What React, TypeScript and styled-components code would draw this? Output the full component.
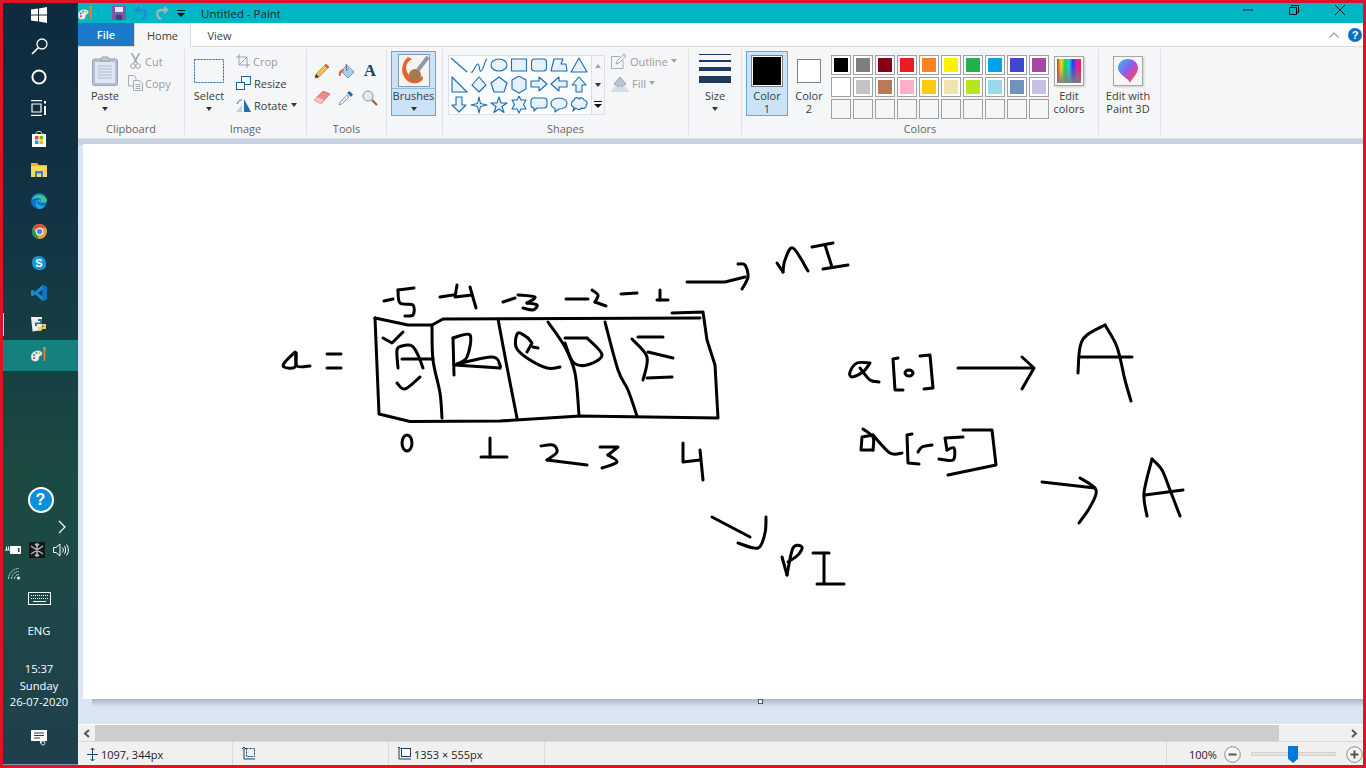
import React from 'react'
import { styled, createGlobalStyle } from 'styled-components'

const GlobalStyle = createGlobalStyle`
  html, body { margin: 0; padding: 0; overflow: hidden; }
  body { font-family: "Open Sans", "Noto Sans", sans-serif; }
  svg { display: block; flex: none; }
`

const Screen = styled.div`
  box-sizing: border-box;
  width: 1366px;
  height: 768px;
  border: 3px solid #dc1329;
  display: flex;
  overflow: hidden;
`

/* ---- taskbar ---- */
const Taskbar = styled.aside`
  width: 75px;
  flex: none;
  display: flex;
  flex-direction: column;
  align-items: center;
  color: #fff;
  background: linear-gradient(180deg, #0e2b3f 0%, #123443 30%, #1b4a42 62%, #1e4747 78%, #1f3f4c 100%);
  border-bottom: 1px solid #7d9aa5;
  box-sizing: border-box;
`
const TaskList = styled.div`
  align-self: stretch;
  margin-top: -3px;
  flex: none;
`
const TaskButton = styled.div<{ $active?: boolean; $running?: boolean }>`
  position: relative;
  height: 30.9px;
  padding-right: 3px;
  display: flex;
  align-items: center;
  justify-content: center;
  background: ${p => (p.$active ? '#14807f' : 'transparent')};
  &::before {
    content: '';
    display: ${p => (p.$running ? 'block' : 'none')};
    position: absolute;
    left: 0;
    top: 4px;
    bottom: 4px;
    width: 1px;
    background: #d8dde0;
  }
`
const HelpBall = styled.div`
  margin-top: 116px;
  width: 22px;
  height: 22px;
  border-radius: 50%;
  border: 2px solid #fff;
  background: #0a8fdc;
  color: #fff;
  font: bold 16px/22px "Liberation Sans", sans-serif;
  text-align: center;
  flex: none;
`
const TrayChevron = styled.div`
  align-self: flex-end;
  margin: 7px 12px 0 0;
  height: 14px;
`
const TrayRow = styled.div`
  align-self: stretch;
  display: flex;
  justify-content: space-between;
  align-items: center;
  padding: 0 9px 0 2px;
  margin-top: 7px;
  height: 18px;
`
const WifiRow = styled.div`
  align-self: flex-start;
  margin: 8px 0 0 5px;
`
const KeyboardRow = styled.div`
  margin: 12px 3px 0 0;
`
const TrayText = styled.div<{ $mt: number }>`
  margin: ${p => p.$mt}px 3px 0 0;
  font-size: 11.2px;
  line-height: 16.5px;
  text-align: center;
  white-space: nowrap;
`
const NotifyRow = styled.div`
  margin: 19px 3px 0 0;
`

/* ---- window chrome ---- */
const Win = styled.main`
  flex: 1;
  min-width: 0;
  display: flex;
  flex-direction: column;
  color: #3b3b3b;
  font-size: 11px;
`
const TitleBar = styled.header`
  height: 20px;
  flex: none;
  background: #00b5c4;
  display: flex;
  align-items: center;
  color: #1e2a2c;
`
const QatSlot = styled.div<{ $w: number; $ml?: number }>`
  width: ${p => p.$w}px;
  margin-left: ${p => p.$ml ?? 0}px;
  flex: none;
  display: flex;
  justify-content: center;
`
const QatSep = styled.div<{ $ml: number }>`
  width: 1px;
  height: 14px;
  margin-left: ${p => p.$ml}px;
  background: #5a9aa0;
  flex: none;
`
const TitleText = styled.div`
  margin-left: 7px;
  font-size: 11.5px;
  flex: 1;
`
const WinControl = styled.div`
  width: 46px;
  flex: none;
  display: flex;
  justify-content: center;
  margin-top: -6px;
`
const Tabs = styled.nav`
  height: 24px;
  flex: none;
  background: #fff;
  display: flex;
  align-items: stretch;
  border-bottom: 1px solid #dadbdc;
  box-sizing: border-box;
`
const FileTab = styled.div`
  width: 56px;
  background: #1979ca;
  color: #fff;
  display: flex;
  align-items: center;
  justify-content: center;
  font-weight: 600;
`
const Tab = styled.div<{ $on?: boolean }>`
  width: 57px;
  display: flex;
  align-items: center;
  justify-content: center;
  background: ${p => (p.$on ? '#f5f6f7' : '#fff')};
  border: 1px solid ${p => (p.$on ? '#dadbdc' : 'transparent')};
  border-bottom: 0;
  margin-bottom: ${p => (p.$on ? '-1px' : '0')};
  box-sizing: border-box;
`
const TabsEnd = styled.div`
  margin-left: auto;
  display: flex;
  align-items: center;
  gap: 9px;
  padding-right: 1px;
`
const Ribbon = styled.section`
  height: 92px;
  flex: none;
  background: #f5f6f7;
  display: flex;
  box-sizing: border-box;
  border-bottom: 1px solid #dfe1e5;
`
const Group = styled.div<{ $w: number }>`
  width: ${p => p.$w}px;
  flex: none;
  box-sizing: border-box;
  border-right: 1px solid #e0e2e5;
  margin: 2px 0 3px;
  display: flex;
  flex-direction: column;
`
const GroupBody = styled.div<{ $pl: number }>`
  flex: 1;
  display: flex;
  padding-left: ${p => p.$pl}px;
  min-height: 0;
`
const GroupLabel = styled.div`
  height: 13px;
  line-height: 13px;
  text-align: center;
  color: #666;
  flex: none;
`
const LargeButton = styled.div<{ $w: number; $on?: boolean }>`
  width: ${p => p.$w}px;
  height: 65px;
  margin: 2px 0 0 0;
  flex: none;
  box-sizing: border-box;
  display: flex;
  flex-direction: column;
  align-items: center;
  line-height: 13px;
  text-align: center;
  background: ${p => (p.$on ? '#cbe3f7' : 'transparent')};
  border: 1px solid ${p => (p.$on ? '#62a5e6' : 'transparent')};
`
const LargeIcon = styled.div`
  height: 37px;
  flex: none;
  display: flex;
  align-items: center;
  justify-content: center;
`
const Caret = styled.i<{ $light?: boolean; $inline?: boolean }>`
  display: inline-block;
  width: 0;
  height: 0;
  border: 3.5px solid transparent;
  border-top: 4px solid ${p => (p.$light ? '#a5a5a5' : '#333')};
  border-bottom: 0;
  margin: ${p => (p.$inline ? '0' : '5px 0 0')};
`
const UpCaret = styled(Caret)`
  transform: rotate(180deg);
`
const SmallColumn = styled.div<{ $ml: number }>`
  margin-left: ${p => p.$ml}px;
  display: flex;
  flex-direction: column;
  padding-top: 1px;
`
const SmallButton = styled.div<{ $off?: boolean }>`
  height: 22px;
  display: flex;
  align-items: center;
  gap: 3px;
  white-space: nowrap;
  color: ${p => (p.$off ? '#9b9b9b' : '#3b3b3b')};
`
const ToolGrid = styled.div`
  display: grid;
  grid-template-columns: repeat(3, 24px);
  grid-auto-rows: 27px;
  justify-items: center;
  align-items: center;
  padding-top: 8px;
`
const BrushIcon = styled.div`
  width: 32px;
  height: 33px;
  box-sizing: border-box;
  border: 1px solid #8c9aa8;
  background: #f4f4f4;
  margin-top: 2px;
  margin-bottom: 1px;
  flex: none;
`
const BrushLabel = styled.div`
  align-self: stretch;
  border-top: 1px solid #8bbcec;
`
const Gallery = styled.div`
  width: 157px;
  height: 60px;
  margin-top: 6px;
  flex: none;
  display: flex;
  box-sizing: border-box;
  border: 1px solid #dcdfe3;
`
const GalleryCells = styled.div`
  width: 142px;
  flex: none;
  display: grid;
  grid-template-columns: repeat(7, 20px);
  grid-auto-rows: 19.6px;
  justify-items: center;
  align-items: center;
  background: #fbfcfe;
  border-right: 1px solid #dcdfe3;
`
const GalleryScroll = styled.div`
  flex: 1;
  display: grid;
  grid-template-rows: repeat(3, 1fr);
  justify-items: center;
  align-items: center;
`
const SizeLines = styled.div`
  display: flex;
  flex-direction: column;
  align-items: center;
  gap: 5px;
  padding-top: 2px;
  height: 35px;
  flex: none;
`
const SizeLine = styled.div<{ $h: number }>`
  width: 32px;
  height: ${p => p.$h}px;
  background: #1f3a5f;
  flex: none;
`
const ColorBox = styled.div<{ $big?: boolean }>`
  box-sizing: border-box;
  width: ${p => (p.$big ? 32 : 24)}px;
  height: ${p => (p.$big ? 32 : 24)}px;
  border: 1px solid #808080;
  padding: 1px;
  display: flex;
  background: #fff;
`
const ColorFill = styled.div<{ $c: string }>`
  flex: 1;
  background: ${p => p.$c};
`
const Palette = styled.div`
  display: grid;
  grid-template-columns: repeat(10, 20px);
  grid-auto-rows: 20px;
  gap: 2px;
  margin-top: 6px;
  margin-left: 1px;
  flex: none;
`
const Swatch = styled.div<{ $c?: string }>`
  box-sizing: border-box;
  border: 1px solid #a0a0a0;
  background: ${p => p.$c ?? 'transparent'};
  box-shadow: ${p => (p.$c ? 'inset 0 0 0 2px #fff' : 'none')};
`
const FramedIcon = styled.div<{ $bg: string }>`
  width: 30px;
  height: 30px;
  box-sizing: border-box;
  border: 1px solid #a6a6a6;
  padding: 1px;
  background: ${p => p.$bg};
  background-clip: content-box;
  box-shadow: 1px 1px 2px rgba(0, 0, 0, 0.18);
  display: flex;
  align-items: center;
  justify-content: center;
`

/* ---- canvas ---- */
const CanvasArea = styled.div`
  position: relative;
  flex: 1;
  min-height: 0;
  background: #dbe5f1;
  padding: 5px 0 0 5px;
  box-shadow: inset 0 6px 0 #c8d1e1;
  border-bottom: 1px solid #fff;
`
const Paper = styled.div`
  height: 555px;
  background: #fff;
`
const PaperShadow = styled.div`
  height: 8px;
  margin-left: 9px;
  background: linear-gradient(180deg, #a9b5c9, #dbe5f1);
`
const Grip = styled.div`
  position: absolute;
  left: 680px;
  top: 560px;
  width: 5px;
  height: 5px;
  box-sizing: border-box;
  background: #fff;
  border: 1px solid #555;
`
const ScrollBar = styled.div`
  height: 16px;
  flex: none;
  background: #f0f0f0;
  display: flex;
  align-items: center;
`
const ScrollArrow = styled.div`
  width: 17px;
  flex: none;
  display: flex;
  justify-content: center;
`
const ScrollThumb = styled.div`
  width: 1184px;
  height: 16px;
  flex: none;
  background: #cdcdcd;
`
const ScrollRest = styled.div`
  flex: 1;
`
const StatusBar = styled.footer`
  height: 24px;
  flex: none;
  box-sizing: border-box;
  background: #f0f0f0;
  border-top: 1px solid #dadada;
  display: flex;
  align-items: stretch;
  color: #222;
`
const StatusCell = styled.div<{ $w?: number }>`
  ${p => (p.$w ? `width: ${p.$w}px; flex: none;` : 'flex: 1;')}
  box-sizing: border-box;
  border-right: 1px solid #dadada;
  padding: 1px 0 0 9px;
  display: flex;
  align-items: center;
  gap: 3px;
`
const ZoomCell = styled.div`
  width: 196px;
  flex: none;
  display: flex;
  align-items: center;
  padding: 1px 0 0 22px;
  box-sizing: border-box;
`
const ZoomText = styled.div`
  width: 35px;
  flex: none;
`
const SliderTrack = styled.div`
  position: relative;
  width: 85px;
  height: 4px;
  margin: 0 10px 0 10px;
  flex: none;
  background: #e2e2e2;
  border: 1px solid #d2d2d2;
  box-sizing: border-box;
`
const SliderThumb = styled.div`
  position: absolute;
  left: 36px;
  top: -7px;
  width: 10px;
  height: 17px;
  background: #0078d7;
  clip-path: polygon(0 0, 100% 0, 100% 75%, 50% 100%, 0 75%);
`

/* ---- icons ---- */
const WindowsLogo = () => (
  <svg width="16" height="16" viewBox="0 0 16 16" fill="#fff">
    <path d="M0 2.6 7 1.5V7.5H0ZM8 1.4 16 0V7.5H8ZM0 8.5H7V14.5L0 13.4ZM8 8.5H16V16L8 14.6Z" />
  </svg>
)
const SearchIcon = () => (
  <svg width="17" height="17" viewBox="0 0 17 17" fill="none" stroke="#fff" strokeWidth="1.3">
    <circle cx="11" cy="6" r="5" />
    <path d="M7.4 9.6 1 16" strokeWidth="1.6" />
  </svg>
)
const CortanaIcon = () => (
  <svg width="16" height="16" viewBox="0 0 16 16" fill="none" stroke="#fff" strokeWidth="2">
    <circle cx="8" cy="8" r="6.6" />
  </svg>
)
const TaskViewIcon = () => (
  <svg width="16" height="16" viewBox="0 0 16 16" fill="none" stroke="#fff" strokeWidth="1.2">
    <path d="M0 .6H11M0 15.4H11M1 4h9v8H1z" />
    <path d="M14 1v2.6M14 6v9" strokeWidth="2" />
  </svg>
)
const StoreIcon = () => (
  <svg width="16" height="18" viewBox="0 0 16 18">
    <path d="M5 4C5 .5 11 .5 11 4" fill="none" stroke="#ddd" strokeWidth="1" />
    <path d="M1 4H15V17H1Z" fill="#fff" />
    <path d="M4 6h3.5v3.5H4z" fill="#f25022" />
    <path d="M8.5 6H12v3.5H8.5z" fill="#7fba00" />
    <path d="M4 10.5h3.5V14H4z" fill="#00a4ef" />
    <path d="M8.5 10.5H12V14H8.5z" fill="#ffb900" />
  </svg>
)
const FolderIcon = () => (
  <svg width="16" height="14" viewBox="0 0 16 14">
    <path d="M0 0H6L8 2H16V14H0Z" fill="#f4b400" />
    <path d="M0 3H16V14H0Z" fill="#fcd665" />
    <path d="M4 14V8H12V14H10V10.5H6V14Z" fill="#2c88d9" />
  </svg>
)
const EdgeIcon = () => (
  <svg width="16" height="16" viewBox="0 0 16 16">
    <circle cx="8" cy="8" r="8" fill="#0a73c8" />
    <path d="M1 7C2 1 13-1 16 7 16 10 12 10.500 10 9 12 6 6 3 1 7Z" fill="#37c987" />
    <path d="M8 16C4 14 3.500 8 7 7 4 10 9 14 14 12.500 13 14.500 11 16 8 16Z" fill="#1fa9e4" />
    <path d="M6 7.500C8 5.500 11 7 10.500 9.500 9 9.800 7 9 6 7.500Z" fill="#fff" fillOpacity=".25" />
  </svg>
)
const ChromeIcon = () => (
  <svg width="15" height="15" viewBox="0 0 16 16">
    <circle cx="8" cy="8" r="8" fill="#e8a33d" />
    <path d="M8 0A8 8 0 0 1 15 4H8A4 4 0 0 0 4.300 6.500L1.300 3.500A8 8 0 0 1 8 0Z" fill="#d9503f" />
    <path d="M1.300 3.500 4.500 10 7.500 16A8 8 0 0 1 1.300 3.500Z" fill="#27945a" />
    <circle cx="8" cy="8" r="4" fill="#fff" />
    <circle cx="8" cy="8" r="3" fill="#4c86f0" />
  </svg>
)
const SkypeBadge = styled.div`
  width: 14px;
  height: 14px;
  border-radius: 6px 7px 5px 7px;
  background: #1495d6;
  color: #fff;
  font: bold 11px/14px "Liberation Sans", sans-serif;
  text-align: center;
`
const VsCodeIcon = () => (
  <svg width="16" height="16" viewBox="0 0 16 16">
    <path d="M11.500 0 16 2V14L11.500 16 4 9.200 1.500 11.200 0 10.200V5.800L1.500 4.800 4 6.800ZM11.500 4.500 7 8 11.500 11.500Z" fill="#1a8ad4" />
    <path d="M11.500 0 16 2V14L11.500 16Z" fill="#0d6fb8" fillOpacity=".8" />
  </svg>
)
const PythonIcon = () => (
  <svg width="16" height="16" viewBox="0 0 16 16">
    <path d="M0 1H11V14L1.500 15.500Z" fill="#eee" />
    <path d="M7 3H11V8H6V10H4V6.500H9V5H7Z" fill="#356a96" />
    <path d="M10 8H15V13H10V15H7.500V11H12.500V10H10Z" fill="#f2cb4c" />
  </svg>
)
const PaintIcon = ({ s = 16 }: { s?: number }) => (
  <svg width={s} height={s} viewBox="0 0 16 16">
    <path d="M0 10C0 5 5 3 9 4 12 5 12 8 9 9 7 10 9 13 6 14 2 15 0 13 0 10Z" fill="#e9eef2" stroke="#9aa5ad" strokeWidth=".4" />
    <circle cx="3" cy="8" r="1.100" fill="#2c7fc9" />
    <circle cx="5.500" cy="6" r="1.100" fill="#3fa34d" />
    <circle cx="8.500" cy="6" r="1" fill="#e6b422" />
    <circle cx="3" cy="11" r="1.100" fill="#d9412b" />
    <path d="M12 0H15L14.300 5 14.300 14 12.700 14 12.700 5Z" fill="#e8842a" />
  </svg>
)
const Snowflake = () => (
  <svg width="16" height="16" viewBox="0 0 16 16">
    <rect width="16" height="16" fill="#16191b" />
    <path d="M8 1V15M2 4 14 12M14 4 2 12M6 2l2 2 2-2M6 14l2-2 2 2" stroke="#b5b8ba" strokeWidth="1.500" fill="none" />
  </svg>
)
const BatteryIcon = () => (
  <svg width="16" height="10" viewBox="0 0 16 10" fill="none" stroke="#fff">
    <path d="M0 5h5M1.500 1.500v3M3.500 1.500v3" />
    <path d="M5.500 1.500H15.500V8.500H5.500Z" fill="#fff" />
    <path d="M13 3H14.500V7H13Z" fill="#1b4a42" stroke="none" />
  </svg>
)
const VolumeIcon = () => (
  <svg width="16" height="14" viewBox="0 0 16 14" fill="none" stroke="#fff">
    <path d="M.5 4.500H3L7 1V13L3 9.500H.5Z" />
    <path d="M9.500 4.500C10.500 6 10.500 8 9.500 9.500M11.500 3C13 5.500 13 8.500 11.500 11M13.500 1.500C16 5 16 9 13.500 12.500" />
  </svg>
)
const WifiIcon = () => (
  <svg width="13" height="13" viewBox="0 0 13 13" fill="none" stroke="#c4d2d2">
    <path d="M.5 12A10.500 10.500 0 0 1 11 1.500M3.500 12A7.500 7.500 0 0 1 11 4.500M6.500 12A4.500 4.500 0 0 1 11 7.500" strokeDasharray="2 .6" />
    <circle cx="10.500" cy="11" r="1.500" fill="#fff" stroke="none" />
  </svg>
)
const KeyboardIcon = () => (
  <svg width="23" height="13" viewBox="0 0 23 13" fill="none" stroke="#fff">
    <rect x=".5" y=".5" width="22" height="12" />
    <path d="M3 3.500h17M3 6.500h17" strokeDasharray="1 1" />
    <path d="M5 9.500h13" />
  </svg>
)
const NotifyIcon = () => (
  <svg width="16" height="16" viewBox="0 0 16 16">
    <path d="M0 0H16V11H11L9 14V11H0Z" fill="#fff" />
    <path d="M3 3H13M3 5.500H13M3 8H9" stroke="#1f3f4c" strokeWidth="1" />
    <circle cx="12" cy="13" r="2" fill="none" stroke="#cfd8dc" />
  </svg>
)
const Chevron = () => (
  <svg width="8" height="14" viewBox="0 0 8 14" fill="none" stroke="#fff" strokeWidth="1.200">
    <path d="M1 1 7 7 1 13" />
  </svg>
)
const SaveIcon = () => (
  <svg width="14" height="14" viewBox="0 0 14 14">
    <path d="M0 0H14V14H0Z" fill="#7a5aa6" />
    <path d="M3 1H11V6H3Z" fill="#e9e4f2" />
    <path d="M4 9H10V14H4Z" fill="#4a3a78" />
  </svg>
)
const UndoIcon = ({ flip, c }: { flip?: boolean; c: string }) => (
  <svg width="14" height="14" viewBox="0 0 14 14" fill="none" style={flip ? { transform: 'scaleX(-1)' } : undefined}>
    <path d="M4 4H8C13 4 13 11 8 13" stroke={c} strokeWidth="2.400" />
    <path d="M0 4 5 0V8Z" fill={c} />
  </svg>
)
const DropMark = () => (
  <svg width="8" height="7" viewBox="0 0 8 7">
    <path d="M0 0H8V1H0ZM0 3H8L4 7Z" fill="#111" />
  </svg>
)
const ClipboardIcon = () => (
  <svg width="26" height="30" viewBox="0 0 26 30">
    <rect x=".5" y="3" width="25" height="26.500" rx="2" fill="#b3bfd4" stroke="#9aa6b8" />
    <rect x="3" y="6" width="20" height="21" fill="#dfe6f1" />
    <path d="M6 10H20M6 13H20M6 16H20M6 19H20M6 22H20" stroke="#a9b8cf" />
    <path d="M8 5 10 1H16L18 5Z" fill="#c5c9ce" stroke="#9aa0a6" />
  </svg>
)
const ScissorsIcon = () => (
  <svg width="11" height="16" viewBox="0 0 11 16" fill="none" stroke="#9aa0ac">
    <path d="M1.500 0 7 10M9.500 0 4 10" strokeWidth="1.500" />
    <circle cx="3" cy="13" r="2.300" />
    <circle cx="8" cy="13" r="2.300" />
  </svg>
)
const CopyIcon = () => (
  <svg width="15" height="16" viewBox="0 0 15 16" fill="#f4f5f7" stroke="#a6adb8">
    <path d="M.5.500H6L8 3V11H.5Z" />
    <path d="M5.500 5.500H11L14.500 8V15.500H5.500Z" />
    <path d="M7.500 9.500H12.500M7.500 11.500H12.500M7.500 13.500H12.500" />
  </svg>
)
const SelectIcon = () => (
  <svg width="30" height="24" viewBox="0 0 30 24" fill="none">
    <rect x=".5" y=".5" width="29" height="23" stroke="#2569a8" strokeDasharray="2 1" />
  </svg>
)
const CropIcon = () => (
  <svg width="14" height="14" viewBox="0 0 14 14" fill="none" stroke="#9aa3b0">
    <path d="M3 0V11H14M0 3H11V14M3 11 11 3" />
  </svg>
)
const ResizeIcon = () => (
  <svg width="15" height="14" viewBox="0 0 15 14" fill="#fff" stroke="#1c62a3">
    <rect x="5.500" y=".5" width="9" height="8" />
    <rect x=".5" y="6.500" width="8" height="7" />
  </svg>
)
const RotateIcon = () => (
  <svg width="15" height="14" viewBox="0 0 15 14">
    <path d="M8 14V1L15 14Z" fill="#2a6ca8" />
    <path d="M0 14 6 7V14Z" fill="#b8d2e8" />
    <path d="M1 6C2 3 4 2 6 2" stroke="#2a6ca8" fill="none" />
  </svg>
)
const PencilIcon = () => (
  <svg width="16" height="16" viewBox="0 0 16 16">
    <path d="M1 15 2 11 12 1 15 4 5 14Z" fill="#efc24e" stroke="#98712a" strokeWidth=".6" />
    <path d="M12 1 15 4 13.500 5.500 10.500 2.500Z" fill="#d9534f" />
    <path d="M1 15 2 11 5 14Z" fill="#333" />
  </svg>
)
const BucketIcon = () => (
  <svg width="17" height="16" viewBox="0 0 17 16">
    <path d="M3 8 9 2 16 9 10 15Z" fill="#a8cde9" stroke="#4f7fa8" strokeWidth=".7" />
    <path d="M8 1 9 8" stroke="#666" />
    <path d="M1 13C0 9 2 7 5 6L6 8C4 8.500 3 10 2.500 13Z" fill="#e8622a" />
  </svg>
)
const TextIcon = styled.div`
  color: #1f3f66;
  font: bold 17px/16px "Liberation Serif", serif;
`
const EraserIcon = () => (
  <svg width="16" height="13" viewBox="0 0 16 13">
    <path d="M0 9 9 0 16 3 7 13Z" fill="#f28a8a" stroke="#a85a5a" strokeWidth=".6" />
    <path d="M0 9 3 6 10 9 7 13Z" fill="#f6c3c3" />
  </svg>
)
const DropperIcon = () => (
  <svg width="16" height="16" viewBox="0 0 16 16">
    <path d="M1 15 2 12 9 5 11 7 4 14Z" fill="#dbe8f3" stroke="#6d8296" strokeWidth=".7" />
    <path d="M9 3 13 7 15 4.500 11.500 1Z" fill="#2a6ca8" />
  </svg>
)
const LensIcon = () => (
  <svg width="16" height="16" viewBox="0 0 16 16">
    <circle cx="6" cy="6" r="5" fill="#dcebf7" stroke="#8a98a6" />
    <path d="M10 10 15 15" stroke="#8a6a46" strokeWidth="2.200" />
  </svg>
)
const BrushArt = () => (
  <svg width="30" height="31" viewBox="0 0 30 31">
    <path d="M9 2C1 9 1 21 10 27 18 31 27 25 23 21 17 26 8 22 7 13 7 9 9 6 13 4Z" fill="#e8622a" />
    <circle cx="16" cy="20" r="6" fill="#a57a50" />
    <path d="M19 15 29 2" stroke="#8f9aa5" strokeWidth="4" />
  </svg>
)
const ToolPen = () => (
  <svg width="16" height="16" viewBox="0 0 16 16" fill="#eef1f4" stroke="#a6adb8">
    <path d="M.5 3.500H9M.5 3.500V15.500H12V7" fill="#f4f5f7" />
    <path d="M5 11 6 8 13 1 15 3 8 10Z" />
  </svg>
)
const FillGray = () => (
  <svg width="18" height="17" viewBox="0 0 18 17">
    <path d="M3 9 9 2 15 9 9 13Z" fill="#b8c4d2" stroke="#98a4b2" />
    <path d="M0 17 3 12H15L18 17Z" fill="#d4dce5" />
  </svg>
)
const MoveCross = () => (
  <svg width="11" height="13" viewBox="0 0 11 13" fill="none" stroke="#1f3f66">
    <path d="M5.500 0V13M0 6.500H11M3.500 2 5.500 0 7.500 2M3.500 11 5.500 13 7.500 11" />
  </svg>
)
const SelectionSize = () => (
  <svg width="13" height="16" viewBox="0 0 13 16" fill="none" stroke="#1f3f66">
    <path d="M2 1V13H13M2 1 0 3M2 1 4 3" />
    <rect x="4.500" y="2.500" width="8" height="8" strokeDasharray="2 1" />
  </svg>
)
const CanvasSize = () => (
  <svg width="13" height="16" viewBox="0 0 13 16" fill="none" stroke="#1f3f66">
    <path d="M1 1V13H13M1 1 0 2.500M1 1 2.500 2.500" />
    <rect x="3.500" y="2.500" width="9" height="8" fill="#fff" />
  </svg>
)
const RoundBtn = () => (
  <svg width="17" height="17" viewBox="0 0 17 17">
    <circle cx="8.500" cy="8.500" r="7.800" fill="#f4f4f4" stroke="#8a8a8a" />
    <path d="M4.500 8.500H12.500" stroke="#555" strokeWidth="2" />
  </svg>
)
const RoundPlus = () => (
  <svg width="17" height="17" viewBox="0 0 17 17">
    <circle cx="8.500" cy="8.500" r="7.800" fill="#f4f4f4" stroke="#8a8a8a" />
    <path d="M4.500 8.500H12.500M8.500 4.500V12.500" stroke="#555" strokeWidth="2" />
  </svg>
)
const Arrowhead = ({ left }: { left?: boolean }) => (
  <svg width="7" height="9" viewBox="0 0 7 9" fill="none" stroke="#555" strokeWidth="2">
    <path d={left ? 'M6 1 2 4.500 6 8' : 'M1 1 5 4.500 1 8'} />
  </svg>
)
const RibbonHelp = styled.div`
  width: 14px;
  height: 14px;
  border-radius: 50%;
  background: #0f6fc6;
  color: #fff;
  font: bold 11px/14px "Liberation Sans", sans-serif;
  text-align: center;
`
const Paint3dDrop = () => (
  <svg width="22" height="26" viewBox="0 0 22 26">
    <defs>
      <linearGradient id="p3d" x1="0" y1="0" x2="1" y2="1">
        <stop offset="0" stopColor="#2cc3f0" />
        <stop offset=".45" stopColor="#8a5cf0" />
        <stop offset=".75" stopColor="#f0457a" />
        <stop offset="1" stopColor="#f5a020" />
      </linearGradient>
    </defs>
    <path d="M11 1C17 1 21 5 21 10 21 16 15 20 13 25 12 20 1 17 1 10 1 5 5 1 11 1Z" fill="url(#p3d)" />
  </svg>
)
const SpectrumFill = styled.div`
  width: 24px;
  height: 24px;
  background:
    linear-gradient(180deg, transparent 30%, rgba(128, 128, 128, 0.9) 100%),
    linear-gradient(90deg, #f01c24, #f0e020, #20d040, #20d0e0, #2040e0, #e020c0, #f01c24);
`

const shapes: React.ReactNode[] = [
  <path d="M1 1 17 15" />,
  <path d="M1 15C3 17 6 6 8 7 10 8 9 15 11 14 14 13 14 4 17 2" />,
  <ellipse cx="9" cy="8" rx="8" ry="6" />,
  <rect x="1.500" y="2" width="15" height="12" />,
  <rect x="1.500" y="2" width="15" height="12" rx="3" />,
  <path d="M1 14 4 2H13L11 7H16L17 14Z" />,
  <path d="M9 1 17 15H1Z" />,
  <path d="M2 1 17 16H2Z" />,
  <path d="M9 1 16 9 9 16 2 9Z" />,
  <path d="M9 1 17 7 14 16H4L1 7Z" />,
  <path d="M9 0 16 4V13L9 17 2 13V4Z" />,
  <path d="M1 5H9V1L17 8 9 15V11H1Z" />,
  <path d="M17 5H9V1L1 8 9 15V11H17Z" />,
  <path d="M9 1 16 9H12V16H6V9H2Z" />,
  <path d="M6 1H12V9H16L9 16 2 9H6Z" />,
  <path d="M9 1 10.500 7.500 17 9 10.500 10.500 9 17 7.500 10.500 1 9 7.500 7.500Z" />,
  <path d="M9 1 11 7H17L12 10.500 14 16.500 9 13 4 16.500 6 10.500 1 7H7Z" />,
  <path d="M9 0 11 4H16L13.500 8.500 16 13H11L9 17 7 13H2L4.500 8.500 2 4H7Z" />,
  <path d="M4 2H14Q17 2 17 5V9Q17 12 14 12H7L4 15V12Q1 12 1 9V5Q1 2 4 2Z" />,
  <path d="M9 2C14 2 17 4.500 17 7.500S14 13 9 13L5 16V12.500C2.500 11.500 1 10 1 7.500 1 4.500 4 2 9 2Z" />,
  <path d="M4 4C5 1 8 1 9 3 11 1 14 2 14 4 17 4 18 8 16 9 17 12 13 13 12 12 10 14 7 14 6 12L3 15 4 11C1 11 0 6 4 4Z" />,
]

const row1 = ['#000', '#7f7f7f', '#880015', '#ed1c24', '#ff7f27', '#fff200', '#22b14c', '#00a2e8', '#3f48cc', '#a349a4']
const row2 = ['#fff', '#c3c3c3', '#b97a57', '#ffaec9', '#ffc90e', '#efe4b0', '#b5e61d', '#99d9ea', '#7092be', '#c8bfe7']

// hand drawn strokes in screen coordinates, a leading ~ means smooth it
const strokes: string[] = [
  // box
  '375,318 408,325 432,325 443,319 700,318',
  '672,313 703,312 707,340 715,365 718,418 580,416 500,421 410,421.500 379,414 375,318',
  '~432,325 433,360 440,393 442,418',
  '~498,319 507,367 517,418',
  '~548,322 565,347 575,373 579,415',
  '~605,322 618,370 628,390 637,416',
  // a =
  '~295,352 285,362 284,367 295,367 296,353',
  '~296,353 297,366 310,366',
  '327,354 341,354', '327,368 341,368',
  // negative indexes
  '384,301 393,299', '414,288 398,290', '~398,290 400,303 413,305 413,315 405,316',
  '440,297 453,295', '457,285 455,297 472,295', '470,287 476,308',
  '503,302 515,298', '~518,295 535,297 527,303', '~527,303 537,305 533,310 523,308',
  '566,299 588,299', '~592,290 598,295 595,302', '595,302 606,306',
  '621,294 637,293', '660,290 660,300', '657,300 668,300',
  '687,282 725,282 745,277', '~738,264 745,265 748,277 742,289',
  // nI
  '777,263 783,272', '~783,272 785,260 793,248 808,271',
  '812,247 833,243', '825,245 832,267', '823,269 848,265',
  // letters in the cells
  '383,338 392,343 403,332',
  '~398,368 397,350 402,346 412,346 418,355 423,368', '402,359 433,359',
  '~397,383 405,389 420,377',
  '454,375 453,338', '~453,338 470,335 467,357 457,364', '~457,364 492,357 500,365 500,368', '500,368 455,365',
  '~528,338 518,333 516,347 527,358 547,368 560,367', '528,338 532,343 527,352', '533,347 538,348',
  '565,338 587,338', '~587,338 602,355 587,365 573,362 565,343',
  '638,337 663,337', '~632,339 647,357 643,380', '648,352 673,358', '647,378 672,377',
  // positive indexes
  '481,457 507,457', '490,438 490,457',
  '~541,446 553,445 557,452 547,460', '547,460 587,465',
  '600,447 618,447 608,455', '~608,455 617,462 602,468',
  '683,443 683,462 700,460', '700,450 703,480',
  // pI
  '712,517 750,537', '~738,543 758,548 765,533 766,517',
  '782,557 787,575', '~787,575 793,548 802,547 798,555 788,562',
  '813,553 829,553', '824,553 824,583', '817,584 844,584',
  // a[0] -> A
  '~870,363 857,363 850,372 852,377 863,372 870,363', '~860,368 870,380 879,382',
  '898,358 893,359 895,390 903,390',
  '920,356 930,355 933,388 924,389',
  '958,368 1033,368', '1022,357 1034,368 1022,389',
  '~1078,373 1080,347 1087,335 1105,325', '~1105,325 1117,347 1125,380 1131,401', '1079,357 1132,357',
  // a[-5] -> A
  '~863,429 873,437 873,450', '873,450 861,450 862,437 873,435', '~873,435 890,453 902,453',
  '912,434 907,435 908,463 919,464',
  '~918,452 922,447 932,445',
  '963,437 945,438 947,450', '~947,450 954,448 953,460 939,459',
  '963,430 992,430 996,465 948,475',
  '1042,482 1095,488', '~1080,478 1096,490 1090,507 1079,523',
  '~1147,516 1144,493 1152,459', '~1152,459 1162,470 1170,490 1180,516', '1145,495 1183,490',
]

// catmull-rom through the points, so the pen strokes don't look like polygons
const strokePath = (raw: string) => {
  const smooth = raw.startsWith('~')
  const pts = raw.replace('~', '').split(' ').map(p => p.split(',').map(Number))
  let d = `M${pts[0][0]} ${pts[0][1]}`
  for (let i = 1; i < pts.length; i++) {
    const [x, y] = pts[i]
    if (!smooth) {
      d += `L${x} ${y}`
      continue
    }
    const a = pts[Math.max(i - 2, 0)]
    const b = pts[i - 1]
    const c = pts[Math.min(i + 1, pts.length - 1)]
    d += `C${b[0] + (x - a[0]) / 6} ${b[1] + (y - a[1]) / 6} ${x - (c[0] - b[0]) / 6} ${y - (c[1] - b[1]) / 6} ${x} ${y}`
  }
  return d
}

const Sketch = () => (
  <svg width="1280" height="555" viewBox="83 144 1280 555" fill="none" stroke="#000" strokeWidth="3" strokeLinecap="round" strokeLinejoin="round">
    {strokes.map((s, i) => <path key={i} d={strokePath(s)} />)}
    <ellipse cx="407" cy="443" rx="5" ry="8" />
    <ellipse cx="909" cy="373" rx="4" ry="3" />
  </svg>
)

export default function App() {
  return (
    <Screen>
      <GlobalStyle />
      <Taskbar>
        <TaskList>
          <TaskButton><WindowsLogo /></TaskButton>
          <TaskButton><SearchIcon /></TaskButton>
          <TaskButton><CortanaIcon /></TaskButton>
          <TaskButton><TaskViewIcon /></TaskButton>
          <TaskButton><StoreIcon /></TaskButton>
          <TaskButton><FolderIcon /></TaskButton>
          <TaskButton><EdgeIcon /></TaskButton>
          <TaskButton><ChromeIcon /></TaskButton>
          <TaskButton><SkypeBadge>S</SkypeBadge></TaskButton>
          <TaskButton><VsCodeIcon /></TaskButton>
          <TaskButton $running><PythonIcon /></TaskButton>
          <TaskButton $active><PaintIcon /></TaskButton>
        </TaskList>
        <HelpBall>?</HelpBall>
        <TrayChevron><Chevron /></TrayChevron>
        <TrayRow><BatteryIcon /><Snowflake /><VolumeIcon /></TrayRow>
        <WifiRow><WifiIcon /></WifiRow>
        <KeyboardRow><KeyboardIcon /></KeyboardRow>
        <TrayText $mt={18}>ENG</TrayText>
        <TrayText $mt={22}>15:37<br />Sunday<br />26-07-2020</TrayText>
        <NotifyRow><NotifyIcon /></NotifyRow>
      </Taskbar>

      <Win>
        <TitleBar>
          <QatSlot $w={15}><PaintIcon s={15} /></QatSlot>
          <QatSep $ml={8} />
          <QatSlot $w={18} $ml={8}><SaveIcon /></QatSlot>
          <QatSlot $w={20} $ml={3}><UndoIcon c="#2b86d0" /></QatSlot>
          <QatSlot $w={22}><UndoIcon flip c="#9fb6bd" /></QatSlot>
          <QatSlot $w={16}><DropMark /></QatSlot>
          <QatSep $ml={4} />
          <TitleText>Untitled - Paint</TitleText>
          <WinControl>
            <svg width="10" height="10" viewBox="0 0 10 10"><path d="M0 5H10" stroke="#111" /></svg>
          </WinControl>
          <WinControl>
            <svg width="10" height="10" viewBox="0 0 10 10" fill="none" stroke="#111"><path d="M2.500 2.500V.5H9.500V7.500H7.500M.5 2.500H7.500V9.500H.5Z" /></svg>
          </WinControl>
          <WinControl>
            <svg width="10" height="10" viewBox="0 0 10 10" stroke="#111"><path d="M0 0 10 10M10 0 0 10" /></svg>
          </WinControl>
        </TitleBar>

        <Tabs>
          <FileTab>File</FileTab>
          <Tab $on>Home</Tab>
          <Tab>View</Tab>
          <TabsEnd>
            <svg width="10" height="6" viewBox="0 0 10 6" fill="none" stroke="#a8a8a8" strokeWidth="1.300"><path d="M.5 5.500 5 1 9.500 5.500" /></svg>
            <RibbonHelp>?</RibbonHelp>
          </TabsEnd>
        </Tabs>

        <Ribbon>
          <Group $w={107}>
            <GroupBody $pl={10}>
              <LargeButton $w={34}>
                <LargeIcon><ClipboardIcon /></LargeIcon>
                Paste
                <Caret />
              </LargeButton>
              <SmallColumn $ml={6}>
                <SmallButton $off><QatSlot $w={14}><ScissorsIcon /></QatSlot>Cut</SmallButton>
                <SmallButton $off><QatSlot $w={14}><CopyIcon /></QatSlot>Copy</SmallButton>
              </SmallColumn>
            </GroupBody>
            <GroupLabel>Clipboard</GroupLabel>
          </Group>

          <Group $w={122}>
            <GroupBody $pl={6}>
              <LargeButton $w={36}>
                <LargeIcon><SelectIcon /></LargeIcon>
                Select
                <Caret />
              </LargeButton>
              <SmallColumn $ml={9}>
                <SmallButton $off><CropIcon />Crop</SmallButton>
                <SmallButton><ResizeIcon />Resize</SmallButton>
                <SmallButton><RotateIcon />Rotate <Caret $inline /></SmallButton>
              </SmallColumn>
            </GroupBody>
            <GroupLabel>Image</GroupLabel>
          </Group>

          <Group $w={80}>
            <GroupBody $pl={3}>
              <ToolGrid>
                <PencilIcon />
                <BucketIcon />
                <TextIcon>A</TextIcon>
                <EraserIcon />
                <DropperIcon />
                <LensIcon />
              </ToolGrid>
            </GroupBody>
            <GroupLabel>Tools</GroupLabel>
          </Group>

          <Group $w={56}>
            <GroupBody $pl={4}>
              <LargeButton $w={45} $on>
                <BrushIcon><BrushArt /></BrushIcon>
                <BrushLabel>Brushes</BrushLabel>
                <Caret />
              </LargeButton>
            </GroupBody>
            <GroupLabel />
          </Group>

          <Group $w={246}>
            <GroupBody $pl={5}>
              <Gallery>
                <GalleryCells>
                  {shapes.map((s, i) => (
                    <svg key={i} width="18" height="18" viewBox="0 0 18 18" fill={i < 2 ? 'none' : '#e6f1f9'} stroke="#1b6cb0" strokeWidth="1.100" strokeLinejoin="round">{s}</svg>
                  ))}
                </GalleryCells>
                <GalleryScroll>
                  <UpCaret $light $inline />
                  <Caret $inline />
                  <DropMark />
                </GalleryScroll>
              </Gallery>
              <SmallColumn $ml={6}>
                <SmallButton $off><ToolPen />Outline <Caret $light $inline /></SmallButton>
                <SmallButton $off><FillGray />Fill <Caret $light $inline /></SmallButton>
              </SmallColumn>
            </GroupBody>
            <GroupLabel>Shapes</GroupLabel>
          </Group>

          <Group $w={53}>
            <GroupBody $pl={8}>
              <LargeButton $w={36}>
                <SizeLines>
                  <SizeLine $h={1} />
                  <SizeLine $h={2} />
                  <SizeLine $h={4} />
                  <SizeLine $h={7} />
                </SizeLines>
                Size
                <Caret />
              </LargeButton>
            </GroupBody>
            <GroupLabel />
          </Group>

          <Group $w={357}>
            <GroupBody $pl={4}>
              <LargeButton $w={42} $on>
                <LargeIcon><ColorBox $big><ColorFill $c="#000" /></ColorBox></LargeIcon>
                Color<br />1
              </LargeButton>
              <LargeButton $w={42}>
                <LargeIcon><ColorBox><ColorFill $c="#fff" /></ColorBox></LargeIcon>
                Color<br />2
              </LargeButton>
              <Palette>
                {row1.map(c => <Swatch key={c} $c={c} />)}
                {row2.map(c => <Swatch key={c} $c={c} />)}
                {row1.map(c => <Swatch key={c} />)}
              </Palette>
              <LargeButton $w={40}>
                <LargeIcon><FramedIcon $bg="#fff"><SpectrumFill /></FramedIcon></LargeIcon>
                Edit<br />colors
              </LargeButton>
            </GroupBody>
            <GroupLabel>Colors</GroupLabel>
          </Group>

          <Group $w={62}>
            <GroupBody $pl={0}>
              <LargeButton $w={58}>
                <LargeIcon><FramedIcon $bg="#f6f6f6"><Paint3dDrop /></FramedIcon></LargeIcon>
                Edit with<br />Paint 3D
              </LargeButton>
            </GroupBody>
            <GroupLabel />
          </Group>
        </Ribbon>

        <CanvasArea>
          <Paper><Sketch /></Paper>
          <PaperShadow />
          <Grip />
        </CanvasArea>

        <ScrollBar>
          <ScrollArrow><Arrowhead left /></ScrollArrow>
          <ScrollThumb />
          <ScrollRest />
          <ScrollArrow><Arrowhead /></ScrollArrow>
        </ScrollBar>

        <StatusBar>
          <StatusCell $w={155}><MoveCross />1097, 344px</StatusCell>
          <StatusCell $w={156}><SelectionSize /></StatusCell>
          <StatusCell $w={156}><CanvasSize />1353 × 555px</StatusCell>
          <StatusCell />
          <ZoomCell>
            <ZoomText>100%</ZoomText>
            <RoundBtn />
            <SliderTrack><SliderThumb /></SliderTrack>
            <RoundPlus />
          </ZoomCell>
        </StatusBar>
      </Win>
    </Screen>
  )
}
